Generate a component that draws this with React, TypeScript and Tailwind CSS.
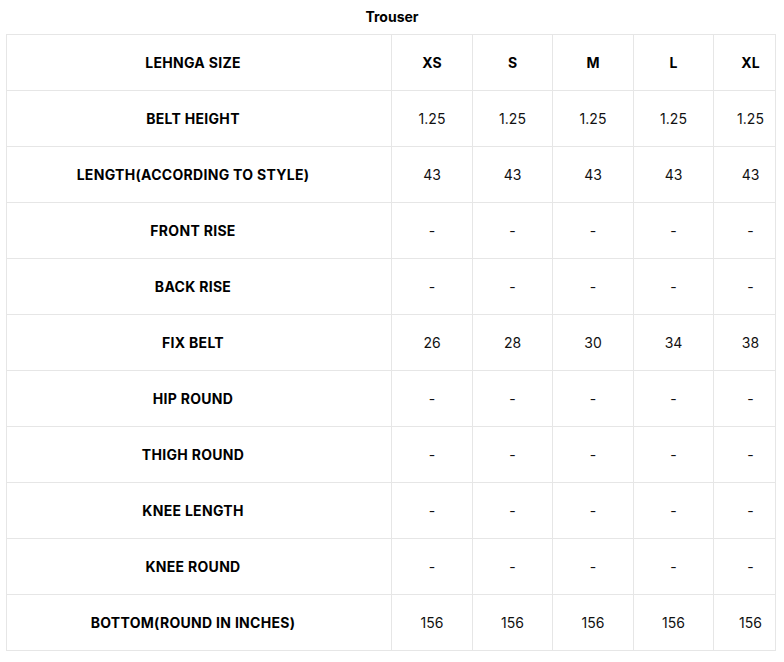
const sizes = ['XS', 'S', 'M', 'L', 'XL'];

const rows: { label: string; values: string[] }[] = [
    { label: 'BELT HEIGHT', values: ['1.25', '1.25', '1.25', '1.25', '1.25'] },
    { label: 'LENGTH(ACCORDING TO STYLE)', values: ['43', '43', '43', '43', '43'] },
    { label: 'FRONT RISE', values: ['-', '-', '-', '-', '-'] },
    { label: 'BACK RISE', values: ['-', '-', '-', '-', '-'] },
    { label: 'FIX BELT', values: ['26', '28', '30', '34', '38'] },
    { label: 'HIP ROUND', values: ['-', '-', '-', '-', '-'] },
    { label: 'THIGH ROUND', values: ['-', '-', '-', '-', '-'] },
    { label: 'KNEE LENGTH', values: ['-', '-', '-', '-', '-'] },
    { label: 'KNEE ROUND', values: ['-', '-', '-', '-', '-'] },
    { label: 'BOTTOM(ROUND IN INCHES)', values: ['156', '156', '156', '156', '156'] },
];

const colWidths = ['w-[385px]', 'w-[81px]', 'w-[80px]', 'w-[81px]', 'w-[80px]', 'w-[62px]'];

const App = () => {
    return (
        <div className="bg-white min-h-screen pt-[7px] px-[6px] font-['Inter',sans-serif] text-[#111]">
            {/* Titulo */}
            <h2 className="text-center text-[14px] font-bold text-black leading-[20px] mb-[7px]">Trouser</h2>

            {/* Tabla */}
            <table className="table-fixed border-collapse w-[770px]">
                <colgroup>
                    {colWidths.map((w, i) => (
                        <col key={i} className={w} />
                    ))}
                </colgroup>
                <tbody>
                    <tr className="h-[56px]">
                        <td className="border border-[#e6e6e6] text-center text-[14px] tracking-[0.3px] font-bold text-black pr-3">LEHNGA SIZE</td>
                        {sizes.map((s, i) => (
                            <td
                                key={s}
                                className={`border border-[#e6e6e6] text-center text-[14px] font-bold text-black ${i === 4 ? 'pl-3' : ''}`}
                            >
                                {s}
                            </td>
                        ))}
                    </tr>
                    {rows.map(row => (
                        <tr key={row.label} className="h-[56px]">
                            <td className="border border-[#e6e6e6] text-center text-[14px] tracking-[0.3px] font-bold text-black pr-3">
                                {row.label}
                            </td>
                            {row.values.map((v, i) => (
                                <td
                                    key={i}
                                    className={`border border-[#e6e6e6] text-center text-[14px] ${i === 4 ? 'pl-3' : ''}`}
                                >
                                    {v}
                                </td>
                            ))}
                        </tr>
                    ))}
                </tbody>
            </table>
        </div>
    );
};

export default App;
